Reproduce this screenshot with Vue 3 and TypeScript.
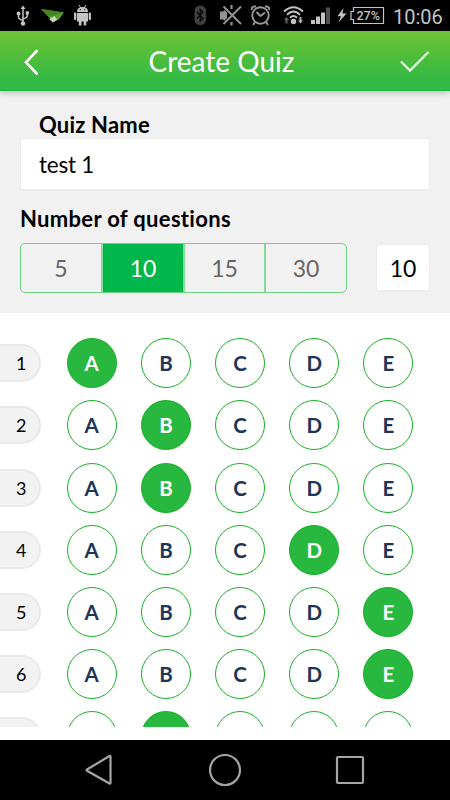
<script setup lang="ts">
import { ref } from 'vue'

const quizName = ref('test 1')
const counts = [5, 10, 15, 30]
const selectedCount = ref(10)
const letters = ['A', 'B', 'C', 'D', 'E']
const answers = ref(['A', 'B', 'B', 'D', 'E', 'E', 'B'])
</script>

<template>
  <div class="screen">
    <div class="status">
      <svg class="status-icons" width="450" height="31" viewBox="0 0 450 31">
        <g fill="none" stroke="#c4c4c4" stroke-width="1.500">
          <path d="M23 8V24M18.500 13.500V17.500Q18.500 19 23 20.500M27.300 12V16Q27.300 17.500 23 19" />
          <path d="M23 5.500L25.500 9H20.500Z" fill="#c4c4c4" stroke="none" />
          <circle cx="23" cy="23.500" r="2.200" fill="#c4c4c4" stroke="none" />
          <circle cx="18.500" cy="13.500" r="1.900" fill="#c4c4c4" stroke="none" />
          <rect x="25.700" y="11.300" width="3.200" height="3.200" fill="#c4c4c4" stroke="none" />
        </g>
        <path d="M49.500 16.500L59 13.500L57 20L53 22.500L50 20Z" fill="#c9d3bd" />
        <path d="M41 9L64 12.500L58 20.500L54.500 16L50 18.500Z" fill="#559e25" />
        <path d="M41 9L64 12.500L50 16.500Z" fill="#438520" />
        <g fill="#c4c4c4">
          <path d="M77 12Q77 7 82.500 7Q88 7 88 12Z" />
          <path d="M77 13H88V21.500H86.300V25.500H83.700V21.500H81.500V25.500H78.800V21.500H77Z" />
          <rect x="74" y="12.500" width="2.300" height="7.500" rx="1" />
          <rect x="88.700" y="12.500" width="2.300" height="7.500" rx="1" />
          <path d="M79 5L81 8M86 5L84 8" stroke="#c4c4c4" stroke-width="1" />
          <circle cx="80.300" cy="9.700" r=".6" fill="#000" />
          <circle cx="84.700" cy="9.700" r=".6" fill="#000" />
        </g>
        <rect x="194.500" y="5.500" width="11.500" height="19.500" rx="5.500" fill="#404040" />
        <path d="M197 12L203 18.500L200.300 21V9.500L203 12L197 18.500" fill="none" stroke="#080808" stroke-width="1.300" />
        <path d="M220 11.500H223L227 8V23L223 19.500H220Z" fill="#929292" />
        <path d="M223.500 6.500L241 24M241 6.500L223.500 24" stroke="#000" stroke-width="3.600" />
        <path d="M223.500 6.500L241 24M241 6.500L223.500 24" stroke="#929292" stroke-width="2" />
        <path d="M231.500 5V9M231.500 22V25.500" stroke="#929292" stroke-width="2.200" />
        <g fill="none" stroke="#989898" stroke-width="1.900">
          <circle cx="260.500" cy="15.500" r="8.200" />
          <path d="M256.500 12L260.500 16L265 12.500M252 10Q251 6 256 6.500M269 10Q270 6 265 6.500M255 22L253 25M266 22L268 25" />
        </g>
        <g fill="none" stroke="#c4c4c4" stroke-width="1.900">
          <path d="M284 11.500Q293.500 3 303 11.500M287 14.700Q293.500 8.500 300 14.700M290 17.700Q293.500 14.300 297 17.700" />
        </g>
        <circle cx="293.500" cy="21.500" r="2.700" fill="#c4c4c4" />
        <path d="M286.500 17L289 20H287.500V23.500H285.500V20H284Z" fill="#646464" />
        <path d="M300.500 17L303 20H301.500V23.500H299.500V20H298Z" fill="#b4b4b4" transform="rotate(180 300.500 20.300)" />
        <g fill="#c4c4c4">
          <rect x="311" y="20" width="4" height="4" />
          <rect x="316" y="16.500" width="4" height="7.500" />
          <rect x="321" y="12.500" width="4" height="11.500" />
          <rect x="326" y="7.500" width="4" height="16.500" fill="#505050" />
          <path d="M343.500 8L337.500 16.300H341L338.500 22.500L346.500 13.500H342.500Z" />
        </g>
        <path d="M353.500 7.500H383.500V23.500H353.500V19.500H351V11.500H353.500Z" fill="none" stroke="#c4c4c4" stroke-width="1.200" />
        <text class="battery" x="356.500" y="20">27%</text>
        <text class="clock" x="393" y="23.500">10:06</text>
      </svg>
    </div>

    <header class="header">
      <svg class="back" width="16" height="26" viewBox="0 0 16 26">
        <path d="M13.700 2L3 13.300L13.700 24.500" />
      </svg>
      <h1>Create Quiz</h1>
      <svg class="done" width="32" height="24" viewBox="0 0 32 24">
        <path d="M2 11.500L11 20.500L29.500 2" />
      </svg>
    </header>

    <section class="form">
      <label class="name-label">Quiz Name</label>
      <div class="field name-field">{{ quizName }}</div>
      <label class="count-label">Number of questions</label>
      <div class="count-row">
        <div class="segments">
          <div
            v-for="c in counts"
            :key="c"
            class="segment"
            :class="{ active: c === selectedCount }"
            @click="selectedCount = c"
          >{{ c }}</div>
        </div>
        <div class="field count-field">{{ selectedCount }}</div>
      </div>
    </section>

    <main class="list">
      <div v-for="(answer, i) in answers" :key="i" class="row">
        <div class="number">{{ i + 1 }}</div>
        <div class="bubbles">
          <div
            v-for="l in letters"
            :key="l"
            class="bubble"
            :class="{ chosen: l === answer }"
            @click="answers[i] = l"
          >{{ l }}</div>
        </div>
      </div>
    </main>

    <nav class="nav">
      <svg width="30" height="34" viewBox="0 0 30 34"><path d="M26.500 3.500V30Q26.500 31 25.500 30.500L3 17.800Q2 17 3 16.500L25.500 3Q26.500 2.500 26.500 3.500Z" /></svg>
      <svg width="34" height="34" viewBox="0 0 34 34"><circle cx="17" cy="17" r="15" /></svg>
      <svg width="30" height="30" viewBox="0 0 30 30"><rect x="2" y="2" width="26" height="26" rx="1" /></svg>
    </nav>
  </div>
</template>

<style>
body {
  margin: 0;
  background: #fff;
}
</style>

<style scoped>
.screen {
  width: 450px;
  height: 800px;
  display: flex;
  flex-direction: column;
  overflow: hidden;
  background: #fff;
  color: #000;
  font-family: Lato, "Liberation Sans", sans-serif;
  font-variant-ligatures: none;
}
.status {
  height: 31px;
  flex: none;
  background: #000;
}
.status-icons {
  display: block;
}
.battery {
  fill: #c4c4c4;
  font: 500 12.5px Roboto, sans-serif;
}
.clock {
  fill: #c4c4c4;
  font: 400 20px Roboto, sans-serif;
}
.header {
  position: relative;
  z-index: 1;
  box-sizing: border-box;
  height: 60px;
  flex: none;
  display: flex;
  align-items: center;
  padding: 2px 19px 0 23px;
  border-bottom: 1px solid #16b43a;
  background: linear-gradient(#70c336, #4dbd3b 45%, #33ba46 85%, #33ba46);
  box-shadow: 0 1px 7px rgba(0, 0, 0, 0.28);
}
.header h1 {
  flex: 1;
  margin: 0;
  padding: 0 0 2px 5px;
  text-align: center;
  font-size: 28px;
  font-weight: 400;
  line-height: 34px;
  color: #fff;
}
.header path {
  fill: none;
  stroke: #fff;
  stroke-width: 2.6;
  stroke-linecap: round;
}
.header .done path {
  stroke: #e2f6dc;
  stroke-width: 2.4;
  stroke-linecap: butt;
}
.form {
  box-sizing: border-box;
  height: 222px;
  flex: none;
  display: flex;
  flex-direction: column;
  padding: 20px 20px 0;
  background: #f1f1f1;
}
.name-label,
.count-label {
  font-size: 22px;
  font-weight: 700;
  line-height: 27px;
  letter-spacing: 0.2px;
}
.name-label {
  padding-left: 19px;
}
.field {
  box-sizing: border-box;
  background: #fff;
  border: 1px solid #ececec;
  border-radius: 4px;
  font-size: 23px;
}
.name-field {
  height: 53px;
  padding-left: 18px;
  line-height: 51px;
  border-bottom-width: 2px;
  font-size: 22.5px;
  letter-spacing: -0.25px;
}
.count-label {
  margin-top: 14px;
  letter-spacing: 0.32px;
}
.count-row {
  display: flex;
  justify-content: space-between;
  align-items: center;
  margin-top: 11px;
}
.segments {
  box-sizing: border-box;
  display: grid;
  grid-template-columns: 80px 82px 81px 1fr;
  width: 327px;
  height: 50px;
  border: 1px solid #6fd384;
  border-radius: 5px;
  overflow: hidden;
}
.segment {
  display: flex;
  align-items: center;
  justify-content: center;
  font-size: 23px;
  color: #666;
}
.segment + .segment {
  border-left: 2px solid #86d997;
}
.segment.active {
  background: #00b74b;
  color: #fff;
}
.count-field {
  width: 54px;
  height: 48px;
  line-height: 46px;
  text-align: center;
  border-bottom-width: 2px;
}
.list {
  height: 414px;
  flex: none;
  box-sizing: border-box;
  padding-top: 25.4px;
  overflow: hidden;
}
.row {
  display: flex;
  align-items: center;
  height: 50px;
  margin-bottom: 12.1px;
}
.number {
  box-sizing: border-box;
  width: 41px;
  height: 38px;
  padding-right: 12.5px;
  border: 2px solid #e9e9e9;
  border-left: 0;
  border-radius: 0 19px 19px 0;
  background: #f2f2f2;
  font-size: 18px;
  line-height: 34px;
  text-align: right;
}
.bubbles {
  display: flex;
  gap: 24.2px;
  margin-left: 25.7px;
}
.bubble {
  box-sizing: border-box;
  width: 50px;
  height: 50px;
  border: 1.2px solid #16b124;
  border-radius: 50%;
  line-height: 48px;
  text-align: center;
  font-size: 20.5px;
  font-weight: 700;
  color: #1d3558;
}
.bubble.chosen {
  background: #28b73f;
  color: #fff;
}
.nav {
  flex: none;
  box-sizing: border-box;
  height: 60px;
  margin-top: 13px;
  padding: 0 85px 0 84px;
  display: flex;
  align-items: center;
  justify-content: space-between;
  background: #000;
}
.nav svg {
  fill: none;
  stroke: #a5a5a5;
  stroke-width: 2.2;
}
</style>
